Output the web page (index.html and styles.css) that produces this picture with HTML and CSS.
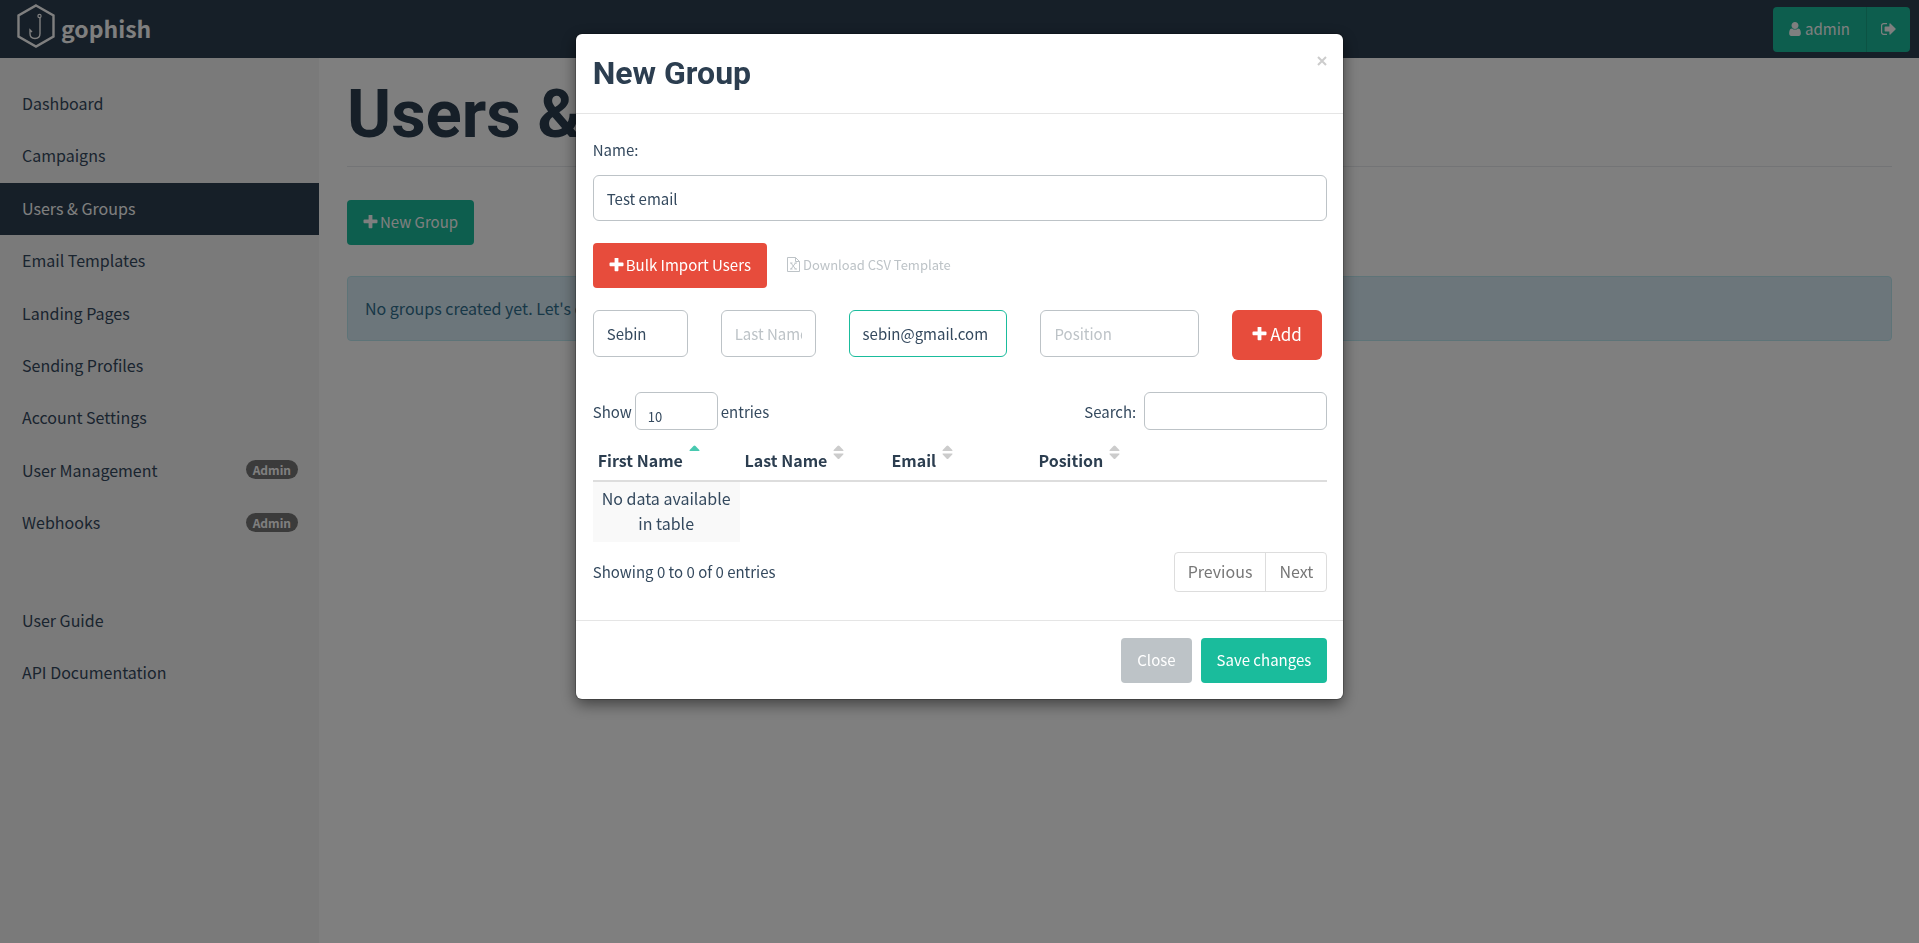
FILE: index.html
```html
<!DOCTYPE html>
<html lang="en">

<head>
    <meta charset="UTF-8">
    <meta name="viewport" content="width=device-width, initial-scale=1.0">
    <title>Users &amp; Groups - Gophish</title>
    <link rel="stylesheet" href="styles.css">
</head>

<body>
    <svg class="symbols" aria-hidden="true">
        <symbol id="plus" viewBox="192 192 1408 1408">
            <path d="M1600 736v192q0 40-28 68t-68 28h-416v416q0 40-28 68t-68 28h-192q-40 0-68-28t-28-68v-416h-416q-40 0-68-28t-28-68v-192q0-40 28-68t68-28h416v-416q0-40 28-68t68-28h192q40 0 68 28t28 68v416h416q40 0 68 28t28 68z" />
        </symbol>
    </svg>

    <header class="navbar">
        <a class="brand" href="#">
            <svg class="logo" viewBox="0 0 38 44" fill="none" stroke="#fff">
                <path d="M19 1.5L36.5 11.5V32.5L19 42.5L1.5 32.5V11.5Z" stroke-width="2.4" />
                <circle cx="22.5" cy="12" r="1.6" stroke-width="1.2" />
                <path d="M23 14v15.500q0 5-5 5q-5 0-5-5v-3.500l2 2" stroke-width="1.400" />
            </svg>
            <span class="brand-name">gophish</span>
        </a>
        <div class="account">
            <button class="btn green user">
                <svg class="icon" viewBox="256 128 1280 1536"><path d="M1536 1399q0 109-62.5 187t-150.500 78h-854q-88 0-150.500-78t-62.500-187q0-85 8.500-160.500t31.500-152 58.500-131 94-89 134.500-34.500q131 128 313 128t313-128q76 0 134.500 34.500t94 89 58.500 131 31.500 152 8.500 160.500zm-256-887q0 159-112.500 271.500t-271.500 112.500-271.500-112.500-112.500-271.500 112.500-271.500 271.500-112.500 271.500 112.500 112.500 271.500z" /></svg>
                admin
            </button>
            <button class="btn green logout" aria-label="Sign out">
                <svg class="icon" viewBox="64 192 1600 1408"><path d="M704 1440q0 4 1 20t.5 26.500-3 23.500-10 19.500-20.500 6.500h-320q-119 0-203.500-84.500t-84.500-203.500v-704q0-119 84.500-203.500t203.500-84.500h320q13 0 22.500 9.500t9.500 22.500q0 4 1 20t.5 26.500-3 23.500-10 19.500-20.500 6.500h-320q-66 0-113 47t-47 113v704q0 66 47 113t113 47h312l11.500 1 11.500 3 8 5.500 7 9 2 13.500zm928-544q0 26-19 45l-544 544q-19 19-45 19t-45-19-19-45v-288h-448q-26 0-45-19t-19-45v-384q0-26 19-45t45-19h448v-288q0-26 19-45t45-19 45 19l544 544q19 19 19 45z" /></svg>
            </button>
        </div>
    </header>

    <div class="page">
        <nav class="sidebar">
            <a href="#">Dashboard</a>
            <a href="#">Campaigns</a>
            <a href="#" class="active">Users &amp; Groups</a>
            <a href="#">Email Templates</a>
            <a href="#">Landing Pages</a>
            <a href="#">Sending Profiles</a>
            <a href="#">Account Settings</a>
            <a href="#">User Management <span class="badge">Admin</span></a>
            <a href="#">Webhooks <span class="badge">Admin</span></a>
            <a href="#" class="guide">User Guide</a>
            <a href="#">API Documentation</a>
        </nav>
        <main class="main">
            <h1>Users &amp; Groups</h1>
            <button class="btn green"><svg class="icon"><use href="#plus" /></svg>New Group</button>
            <div class="alert">No groups created yet. Let's create one!</div>
        </main>
    </div>

    <!-- new group modal -->
    <div class="backdrop">
        <div class="modal" role="dialog" aria-labelledby="modal-title">
            <div class="modal-header">
                <h4 id="modal-title">New Group</h4>
                <button class="close" aria-label="Close dialog">
                    <svg viewBox="0 0 10 10"><path d="M1 1L9 9M9 1L1 9" /></svg>
                </button>
            </div>
            <div class="modal-body">
                <label class="name-label" for="name">Name:</label>
                <input class="control" type="text" id="name" value="Test email">
                <div class="import">
                    <button class="btn red"><svg class="icon"><use href="#plus" /></svg>Bulk Import Users</button>
                    <a class="template" href="#">
                        <svg viewBox="0 0 13 15" fill="none" stroke="currentColor"><path d="M.5.5H8.500L12.500 4.500V14.500H.5ZM8.500.5V4.500H12.500M4 6L8.500 12M8.500 6L4 12M3 6H5.500M7.500 6H10M3 12H5.500M7.500 12H10" /></svg>Download CSV Template
                    </a>
                </div>
                <form class="target">
                    <input class="control" type="text" placeholder="First Name" aria-label="First Name" value="Sebin">
                    <input class="control" type="text" placeholder="Last Name" aria-label="Last Name">
                    <input class="control wide focused" type="email" placeholder="Email" aria-label="Email" value="sebin@gmail.com">
                    <input class="control wide" type="text" placeholder="Position" aria-label="Position">
                    <button class="btn red large" type="button"><svg class="icon"><use href="#plus" /></svg>Add</button>
                </form>
                <div class="table-tools">
                    <label class="entries">Show
                        <select class="control small length">
                            <option>10</option>
                            <option>25</option>
                            <option>50</option>
                            <option>100</option>
                        </select>
                        entries</label>
                    <label class="filter">Search: <input class="control small" type="search"></label>
                </div>
                <table>
                    <thead>
                        <tr>
                            <th>First Name<svg class="sort asc" viewBox="0 0 11 15"><path d="M1 6Q0 6 .7 5L4.500 1Q5.500 0 6.500 1L10.300 5Q11 6 10 6Z" /></svg></th>
                            <th>Last Name<svg class="sort" viewBox="0 0 11 15"><path d="M1 6Q0 6 .7 5L4.500 1Q5.500 0 6.500 1L10.300 5Q11 6 10 6ZM1 8.500Q0 8.500 .7 9.500L4.500 13.500Q5.500 14.500 6.500 13.500L10.300 9.500Q11 8.500 10 8.500Z" /></svg></th>
                            <th>Email<svg class="sort" viewBox="0 0 11 15"><path d="M1 6Q0 6 .7 5L4.500 1Q5.500 0 6.500 1L10.300 5Q11 6 10 6ZM1 8.500Q0 8.500 .7 9.500L4.500 13.500Q5.500 14.500 6.500 13.500L10.300 9.500Q11 8.500 10 8.500Z" /></svg></th>
                            <th>Position<svg class="sort" viewBox="0 0 11 15"><path d="M1 6Q0 6 .7 5L4.500 1Q5.500 0 6.500 1L10.300 5Q11 6 10 6ZM1 8.500Q0 8.500 .7 9.500L4.500 13.500Q5.500 14.500 6.500 13.500L10.300 9.500Q11 8.500 10 8.500Z" /></svg></th>
                            <th></th>
                        </tr>
                    </thead>
                    <tbody>
                        <tr>
                            <td>No data available in table</td>
                        </tr>
                    </tbody>
                </table>
                <div class="table-footer">
                    <span>Showing 0 to 0 of 0 entries</span>
                    <div class="pagination">
                        <a href="#">Previous</a>
                        <a href="#">Next</a>
                    </div>
                </div>
            </div>
            <div class="modal-footer">
                <button class="btn gray">Close</button>
                <button class="btn green">Save changes</button>
            </div>
        </div>
    </div>
</body>

</html>
```
FILE: styles.css
```css
* {
    box-sizing: border-box;
}

body {
    margin: 0;
    font-family: "Noto Sans CJK SC", sans-serif;
    font-size: 16px;
    line-height: 25px;
    color: #34495e;
    background: #fff;
}

a {
    color: inherit;
    text-decoration: none;
}

input,
select,
button {
    font-family: inherit;
}

.symbols {
    display: none;
}

/* navbar */
.navbar {
    display: flex;
    justify-content: space-between;
    height: 58px;
    padding: 4px 9px 0 17px;
    background: #2c3e50;
}

.brand {
    display: flex;
    gap: 6px;
    color: #fff;
}

.logo {
    width: 38px;
    height: 44px;
}

.brand-name {
    font-size: 23px;
    font-weight: bold;
    line-height: 48px;
}

.account {
    display: flex;
    padding-top: 3px;
}

/* buttons */
.btn {
    display: inline-flex;
    align-items: center;
    gap: 2px;
    height: 45px;
    padding: 0 16px 2px;
    border: 0;
    border-radius: 4px;
    color: #fff;
    font-size: 15px;
    line-height: 20px;
}

.icon {
    width: 15px;
    height: 14px;
    fill: currentColor;
}

.green {
    background: #1abc9c;
}

.red {
    background: #e74c3c;
}

.gray {
    background: #bdc3c7;
}

.large {
    height: 50px;
    padding: 0 20px 2px;
    border-radius: 6px;
    font-size: 17px;
    gap: 3px;
}

.user {
    gap: 4px;
    border-radius: 4px 0 0 4px;
    border-right: 1px solid #18a689;
}

.user .icon {
    width: 12px;
}

.logout {
    padding: 0 14px 2px;
    border-radius: 0 4px 4px 0;
}

/* page */
.page {
    display: flex;
    min-height: calc(100vh - 58px);
}

.sidebar {
    flex: 0 0 319px;
    padding-top: 20px;
    background: #f5f5f5;
}

.sidebar a {
    display: flex;
    align-items: center;
    justify-content: space-between;
    padding: 14px 21px 16px 22px;
    line-height: 1.4;
}

.sidebar .active {
    color: #fff;
    background: #2c3e50;
}

.sidebar .guide {
    margin-top: 45px;
}

.badge {
    padding: 0 7px;
    border-radius: 10px;
    background: #777;
    color: #fff;
    font-size: 12px;
    font-weight: bold;
    line-height: 19px;
}

.main {
    flex: 1;
    padding: 19px 27px 0 28px;
}

h1 {
    margin: 0 0 33px;
    padding-bottom: 15px;
    border-bottom: 1px solid #e7e9ec;
    color: #2c3e50;
    font-family: Roboto, sans-serif;
    font-size: 67px;
    line-height: 74px;
}

.alert {
    margin-top: 31px;
    padding: 19px 17px;
    border: 1px solid #bce8f1;
    border-radius: 4px;
    color: #31708f;
    background: #d9edf7;
}

/* modal */
.backdrop {
    position: fixed;
    inset: 0;
    padding-top: 34px;
    background: rgba(0, 0, 0, .5);
}

.modal {
    width: 40%;
    margin: 0 auto;
    border-radius: 6px;
    background: #fff;
    box-shadow: 0 5px 15px rgba(0, 0, 0, .5), 0 0 0 1px rgba(0, 0, 0, .2);
    font-size: 15px;
}

.modal-header {
    display: flex;
    justify-content: space-between;
    align-items: flex-start;
    padding: 20px 16px 21px 17px;
    border-bottom: 1px solid #e5e5e5;
}

h4 {
    margin: 0;
    color: #2c3e50;
    font-family: Roboto, sans-serif;
    font-size: 32px;
    line-height: 38px;
}

.close {
    display: flex;
    padding: 2px 0;
    border: 0;
    background: none;
}

.close svg {
    width: 10px;
    height: 10px;
    stroke: #ccc;
    stroke-width: 2;
}

.modal-body {
    padding: 23px 16px 28px 17px;
}

.name-label {
    display: block;
    margin-bottom: 13px;
}

.control {
    width: 100%;
    height: 46px;
    padding: 0 13px;
    border: 1px solid #bdc3c7;
    border-radius: 6px;
    outline: 0;
    color: #34495e;
    background: #fff;
    font-size: 15px;
}

.control::placeholder {
    color: #bdc3c7;
}

.focused {
    border-color: #1abc9c;
}

.import {
    display: flex;
    gap: 20px;
    align-items: center;
    margin: 22px 0;
}

.template {
    display: flex;
    align-items: center;
    gap: 3px;
    padding-bottom: 2px;
    color: #bdc3c7;
    font-size: 13px;
}

.template svg {
    width: 13px;
    height: 15px;
}

.target {
    display: grid;
    grid-template-columns: repeat(12, minmax(0, 1fr));
    column-gap: 33px;
    align-items: start;
    margin-bottom: 32px;
}

.target .control {
    grid-column: span 2;
    height: 47px;
}

.target .wide {
    grid-column: span 3;
}

.target .btn {
    grid-column: span 2;
    justify-self: start;
}

.table-tools,
.table-footer {
    display: flex;
    align-items: center;
    justify-content: space-between;
}

.small {
    height: 38px;
}

.entries {
    display: flex;
    align-items: center;
    gap: 3px;
}

.length {
    width: 83px;
    padding: 11px 12px 0;
    appearance: none;
    font-size: 13px;
}

.filter {
    display: flex;
    align-items: center;
    gap: 8px;
}

.filter .control {
    width: 183px;
}

table {
    width: 100%;
    margin: 11px 0 10px;
    border-collapse: collapse;
    table-layout: fixed;
    font-size: 16px;
}

th {
    height: 40px;
    padding: 0 5px 4px;
    border-bottom: 2px solid #ddd;
    color: #2c3e50;
    text-align: left;
}

.sort {
    width: 11px;
    height: 15px;
    margin-left: 6px;
    vertical-align: 7px;
    fill: #ccc;
}

.asc {
    fill: #48c9b0;
}

td {
    padding: 4px 5px 6px;
    background: #f9f9f9;
    text-align: center;
}

.table-footer span {
    padding-bottom: 2px;
}

.pagination {
    display: flex;
    border: 1px solid #ddd;
    border-radius: 4px;
    color: #777;
    font-size: 16px;
    line-height: 36px;
}

.pagination a {
    padding: 0 13px 2px;
}

.pagination a + a {
    border-left: 1px solid #ddd;
}

.modal-footer {
    display: flex;
    justify-content: flex-end;
    gap: 9px;
    padding: 17px 16px 16px;
    border-top: 1px solid #e5e5e5;
}
```
